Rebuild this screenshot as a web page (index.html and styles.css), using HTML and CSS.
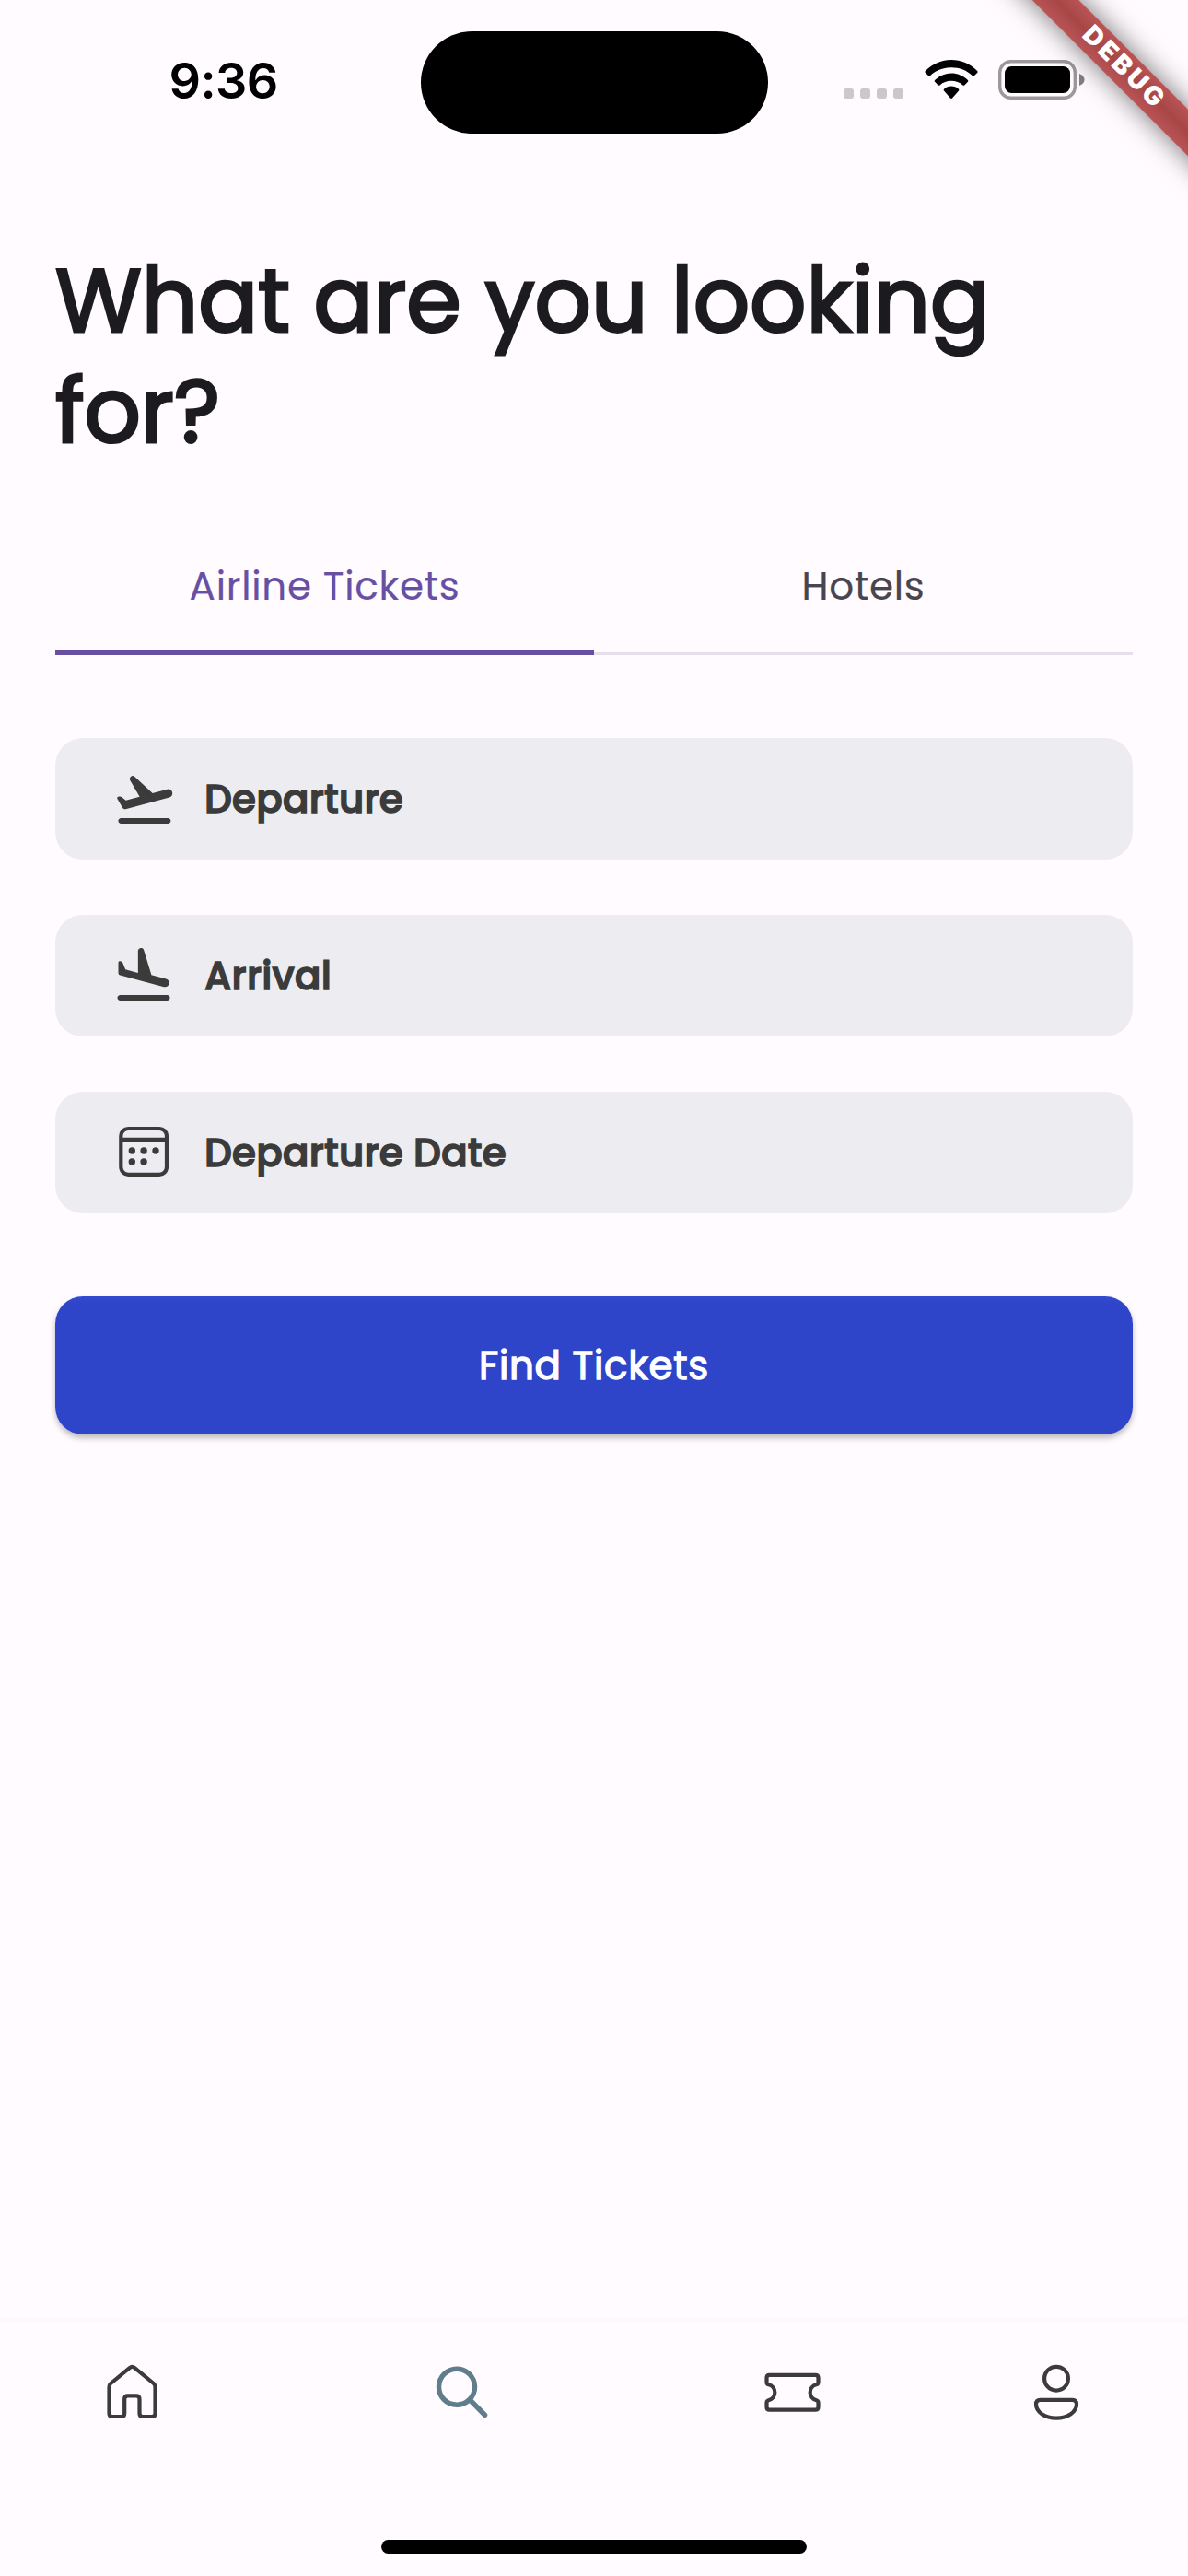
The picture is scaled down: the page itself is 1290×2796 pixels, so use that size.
FILE: index.html
```html
<!DOCTYPE html>
<html lang="en">
<head>
<meta charset="utf-8">
<title>Search</title>
<link rel="stylesheet" href="styles.css">
</head>
<body>
<div class="screen">
  <header class="status">
    <div class="time">9:36</div>
    <div class="island"></div>
    <div class="indicators">
      <div class="signal"><i></i><i></i><i></i><i></i></div>
      <svg class="wifi" width="58" height="43" viewBox="0 0 58 43">
        <path d="M29 0C39.500 0 49.500 4.200 57.200 12Q58 13 57.200 13.900L53.800 17.300Q52.900 18 52 17.200C46 11.400 38 8.200 29 8.200S12 11.400 6 17.200Q5.100 18 4.200 17.300L.8 13.900Q0 13 .8 12C8.500 4.200 18.500 0 29 0Z"/>
        <path d="M29 14.600C35.600 14.600 41.900 17.200 46.900 22Q47.700 22.900 46.900 23.800L43.300 27.400Q42.400 28.200 41.500 27.400C38 24.400 33.700 22.800 29 22.800S20 24.400 16.500 27.400Q15.600 28.200 14.700 27.400L11.100 23.800Q10.300 22.900 11.100 22C16.100 17.200 22.400 14.600 29 14.600Z"/>
        <path d="M29 28.600C32 28.600 34.800 29.800 37 31.700Q37.900 32.600 37 33.500L30 41.500Q29 42.300 28 41.500L21 33.500Q20.100 32.600 21 31.700C23.200 29.800 26 28.600 29 28.600Z"/>
      </svg>
      <svg class="battery" width="95" height="43" viewBox="0 0 95 43">
        <rect x="1.700" y="1.700" width="81.600" height="39.600" rx="12" fill="none" stroke="#9b999b" stroke-width="3.400"/>
        <rect x="7" y="7" width="71" height="29" rx="7.500"/>
        <path d="M88 15Q93.500 17.500 93.500 21.500T88 28Z" fill="#828083"/>
      </svg>
    </div>
  </header>
  <div class="ribbon">DEBUG</div>

  <main class="content">
    <h1 class="title">What are you looking<br>for?</h1>
    <nav class="tabs">
      <div class="tab tab-active">Airline Tickets</div>
      <div class="tab">Hotels</div>
    </nav>
    <div class="fields">
      <div class="field">
        <svg width="72" height="72" viewBox="-0.300 0 24 24"><path d="M20.500 19h-17c-.55 0-1 .45-1 1s.45 1 1 1h17c.55 0 1-.45 1-1s-.45-1-1-1zm1.570-9.360c-.22-.8-1.040-1.270-1.840-1.060L14.920 10 8.460 3.980c-.27-.26-.66-.35-1.020-.25-.68.190-1 .970-.65 1.580l3.440 5.960-4.970 1.330-1.570-1.240c-.25-.19-.57-.26-.88-.18l-.33.090c-.32.080-.47.450-.3.730l1.880 3.250c.23.390.69.580 1.120.47L21 11.480c.8-.22 1.280-1.040 1.070-1.840z"/></svg>
        <span>Departure</span>
      </div>
      <div class="field">
        <svg width="72" height="72" viewBox="0 0 24 24"><path d="M20.500 19h-17c-.55 0-1 .45-1 1s.45 1 1 1h17c.55 0 1-.45 1-1s-.45-1-1-1zM3.510 11.810l15.830 4.240c.8.210 1.620-.26 1.840-1.060.21-.8-.26-1.620-1.060-1.840l-5.310-1.420-2.760-9.020c-.1-.35-.38-.61-.73-.71-.69-.19-1.370.33-1.370 1.040v7.950l-4.570-1.220-.93-2.320c-.11-.29-.35-.5-.65-.59l-.33-.09a.5.500 0 0 0-.63.490v3.790c0 .36.270.66.670.76z"/></svg>
        <span>Arrival</span>
      </div>
      <div class="field">
        <svg width="72" height="72" viewBox="0 0 72 72">
          <rect x="11.300" y="10" width="49.700" height="49.800" rx="8" fill="none" stroke="#3b3b3b" stroke-width="4.200"/>
          <path d="M11 21.800H61" stroke="#3b3b3b" stroke-width="4.200"/>
          <circle cx="23.300" cy="34" r="3.700"/><circle cx="36.100" cy="34" r="3.700"/><circle cx="49" cy="34" r="3.700"/>
          <circle cx="23.300" cy="46" r="3.700"/><circle cx="36.100" cy="46" r="3.700"/>
        </svg>
        <span>Departure Date</span>
      </div>
    </div>
    <button class="submit">Find Tickets</button>
  </main>

  <nav class="bottom">
    <div class="items">
      <svg width="72" height="72" viewBox="0.500 0 72 72"><path d="M33.500 8.800Q36 6.800 38.500 8.800L59.300 26Q61 27.500 61 30V58.500Q61 62 57.500 62H47.500Q44 62 44 58.500V43Q44 39.300 40.500 39.300H31.200Q27.700 39.300 27.700 43V58.500Q27.700 62 24.200 62H14.500Q11 62 11 58.500V30Q11 27.500 12.700 26Z"/></svg>
      <svg class="active" width="72" height="72" viewBox="0 0 72 72"><circle cx="30" cy="29.700" r="19.500"/><path d="M44.700 44.300 60.500 60.300"/></svg>
      <svg width="72" height="72" viewBox="0 0 72 72"><path d="M10.500 16.800H60.500Q63.500 16.800 63.500 20V24.500Q63.500 26.800 61.500 27.200A8.700 8.700 0 0 0 61.500 44.200Q63.500 44.700 63.500 47V51.500Q63.500 54.700 60.500 54.700H10.500Q7.500 54.700 7.500 51.500V47Q7.500 44.700 9.500 44.200A8.700 8.700 0 0 0 9.500 27.200Q7.500 26.800 7.500 24.500V20Q7.500 16.800 10.500 16.800Z"/></svg>
      <svg width="72" height="72" viewBox="0 0 72 72"><circle cx="36" cy="20.700" r="12.900"/><path d="M18.500 43.800H53.500Q58 43.800 58 48.500C58 57 48.500 63.600 36 63.600S14 57 14 48.500Q14 43.800 18.500 43.800Z"/></svg>
    </div>
    <div class="home-bar"></div>
  </nav>
</div>
</body>
</html>
```

FILE: styles.css
```css
* { box-sizing: border-box; }
body { margin: 0; background: #fffbff; }
svg { display: block; flex: none; }
.screen {
  position: relative;
  display: flex;
  flex-direction: column;
  width: 1290px;
  height: 2796px;
  overflow: hidden;
  background: #fffbff;
  font-family: Poppins, Inter, sans-serif;
  color: #1c1b1f;
}
.status {
  display: grid;
  grid-template-columns: 456.5px 377px 1fr;
  height: 177px;
  flex: none;
  align-items: start;
}
.time {
  padding: 55px 0 0 183.5px;
  font: 600 54px/66px Inter, sans-serif;
  letter-spacing: -.6px;
  color: #000;
}
.island { height: 111px; margin-top: 33.5px; border-radius: 56px; background: #000; }
.indicators { display: flex; align-items: flex-start; padding: 65px 0 0 82.5px; }
.signal { display: flex; gap: 7px; padding-top: 31px; }
.signal i { width: 11px; height: 11px; border-radius: 3px; background: #cac8cb; }
.wifi { margin-left: 23px; }
.battery { margin-left: 22px; }
.ribbon {
  position: absolute;
  left: 1048px;
  top: 53.5px;
  width: 340px;
  height: 36px;
  padding-left: 6px;
  transform: rotate(45deg);
  background: linear-gradient(#b95456, #a84646 50%, #b95456);
  box-shadow: 0 0 30px rgba(0, 0, 0, .55);
  font: 900 28px/32px Inter, sans-serif;
  letter-spacing: 3.5px;
  color: #fff;
  text-align: center;
}
.content { flex: 1; padding: 90px 60px 0; }
/* Headings and labels are emboldened by a thin outline around the glyphs. */
.title {
  margin: 0;
  font-size: 96px;
  line-height: 120px;
  font-weight: 400;
  -webkit-text-stroke: 3px #1c1b1f;
  white-space: nowrap;
}
.tabs { display: flex; margin-top: 58px; height: 146px; box-shadow: inset 0 -3px #e7e0ec; }
.tab {
  flex: 1;
  padding-top: 48px;
  font-size: 42px;
  line-height: 48px;
  font-weight: 400;
  letter-spacing: .75px;
  -webkit-text-stroke: .2px currentColor;
  text-align: center;
  color: #49454f;
}
.tab-active { color: #6750a4; border-bottom: 6px solid #6750a4; }
.fields { display: flex; flex-direction: column; gap: 60px; margin-top: 90px; }
.field {
  display: flex;
  align-items: center;
  gap: 30px;
  height: 132px;
  padding-left: 60px;
  border-radius: 30px;
  background: #ededf1;
  font-size: 42px;
  font-weight: 500;
  letter-spacing: .25px;
  color: #3b3b3b;
  fill: #3b3b3b;
}
.field span { -webkit-text-stroke: 1.5px #3b3b3b; }
.submit {
  display: block;
  width: 100%;
  height: 150px;
  margin-top: 90px;
  padding: 0;
  border: 0;
  border-radius: 30px;
  background: linear-gradient(#334bce, #2e44c9 9px);
  box-shadow: 0 4px 6px rgba(0, 0, 0, .26);
  font: inherit;
  font-size: 42px;
  font-weight: 400;
  letter-spacing: .7px;
  -webkit-text-stroke: 1.3px #fff;
  color: #fff;
}
.bottom { height: 280px; flex: none; padding-top: 41px; border-top: 4px solid #fdf8fc; }
.items {
  display: grid;
  grid-template-columns: 287px 430px 287px 286px;
  justify-items: center;
  fill: none;
  stroke: #3b3b3b;
  stroke-width: 4.2;
  stroke-linecap: round;
  stroke-linejoin: round;
}
.active { stroke: #607d8b; stroke-width: 5.5; }
.home-bar { width: 462px; height: 15px; margin: 124px auto 0; border-radius: 8px; background: #000; }
```
